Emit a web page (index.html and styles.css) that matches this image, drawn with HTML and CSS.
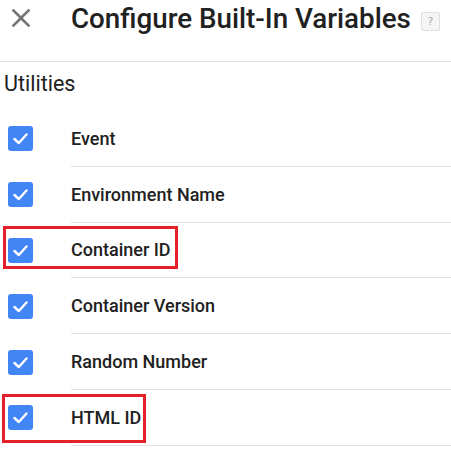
FILE: index.html
```html
<!DOCTYPE html>
<html lang="en">
<head>
<meta charset="utf-8">
<title>Configure Built-In Variables</title>
<link rel="stylesheet" href="styles.css">
</head>
<body>
<div class="panel">
  <header class="header">
    <svg class="close" viewBox="0 0 24 24" aria-hidden="true"><path d="M19 6.41L17.59 5 12 10.59 6.41 5 5 6.41 10.59 12 5 17.59 6.41 19 12 13.41 17.59 19 19 17.59 13.41 12z"/></svg>
    <h1 class="title">Configure Built-In Variables</h1>
    <span class="help">?</span>
  </header>
  <div class="section">Utilities</div>
  <ul class="list">
    <li class="row">
      <span class="check"><svg viewBox="0 0 25 25"><polyline points="6.5,13 10.8,17 18.5,8.5"/></svg></span>
      <span class="label">Event</span>
    </li>
    <li class="row">
      <span class="check"><svg viewBox="0 0 25 25"><polyline points="6.5,13 10.8,17 18.5,8.5"/></svg></span>
      <span class="label">Environment Name</span>
    </li>
    <li class="row">
      <span class="check"><svg viewBox="0 0 25 25"><polyline points="6.5,13 10.8,17 18.5,8.5"/></svg></span>
      <span class="label">Container ID</span>
      <span class="highlight hl-container"></span>
    </li>
    <li class="row">
      <span class="check"><svg viewBox="0 0 25 25"><polyline points="6.5,13 10.8,17 18.5,8.5"/></svg></span>
      <span class="label">Container Version</span>
    </li>
    <li class="row">
      <span class="check"><svg viewBox="0 0 25 25"><polyline points="6.5,13 10.8,17 18.5,8.5"/></svg></span>
      <span class="label">Random Number</span>
    </li>
    <li class="row">
      <span class="check"><svg viewBox="0 0 25 25"><polyline points="6.5,13 10.8,17 18.5,8.5"/></svg></span>
      <span class="label">HTML ID</span>
      <span class="highlight hl-html"></span>
    </li>
  </ul>
</div>
</body>
</html>
```

FILE: styles.css
```css
* { box-sizing: border-box; }
html, body {
  margin: 0;
  padding: 0;
  background: #ffffff;
}
body {
  font-family: Roboto, "Noto Sans", Arial, sans-serif;
  color: #212121;
  overflow: hidden;
}
.panel {
  width: 451px;
}
.header {
  display: flex;
  align-items: flex-start;
  height: 62px;
  padding-top: 3px;
  border-bottom: 1px solid #e0e0e0;
}
.close {
  width: 32px;
  height: 32px;
  margin-left: 5px;
  margin-top: -1px;
  fill: #757575;
  flex: none;
}
.title {
  margin: 0 0 0 34px;
  font-size: 27.75px;
  line-height: 32px;
  font-weight: 500;
  color: #212121;
  white-space: nowrap;
}
.help {
  margin-left: auto;
  margin-right: 11px;
  margin-top: 9px;
  width: 19px;
  height: 19px;
  flex: none;
  display: flex;
  align-items: center;
  justify-content: center;
  background: #f5f5f5;
  border: 1px solid #e0e0e0;
  border-radius: 2px;
  font-family: "DejaVu Sans", sans-serif;
  font-size: 11px;
  color: #aaaaaa;
}
.section {
  height: 49px;
  padding: 8.5px 0 0 4px;
  font-size: 21.5px;
  line-height: 26px;
  font-weight: 400;
  color: #212121;
}
.list {
  list-style: none;
  margin: 0;
  padding: 0;
}
.row {
  position: relative;
  display: flex;
  align-items: center;
  padding-left: 8px;
  height: 55.8px;
}
.check {
  flex: none;
  width: 25px;
  height: 25px;
  margin-right: 38px;
  border-radius: 3px;
  background: #4285f4;
  display: flex;
}
.check svg {
  width: 25px;
  height: 25px;
}
.check polyline {
  fill: none;
  stroke: #ffffff;
  stroke-width: 2.4;
  stroke-linecap: round;
  stroke-linejoin: round;
}
.label {
  flex: 1;
  align-self: stretch;
  display: flex;
  align-items: center;
  border-bottom: 1px solid #e0e0e0;
  font-size: 18px;
  font-weight: 500;
  color: #212121;
}
.highlight {
  position: absolute;
  border: 3px solid #e5202a;
  pointer-events: none;
}
.hl-container {
  left: 3px;
  top: 3.4px;
  width: 175px;
  height: 43px;
}
.hl-html {
  left: 2px;
  top: 4px;
  width: 144px;
  height: 49px;
}
```
